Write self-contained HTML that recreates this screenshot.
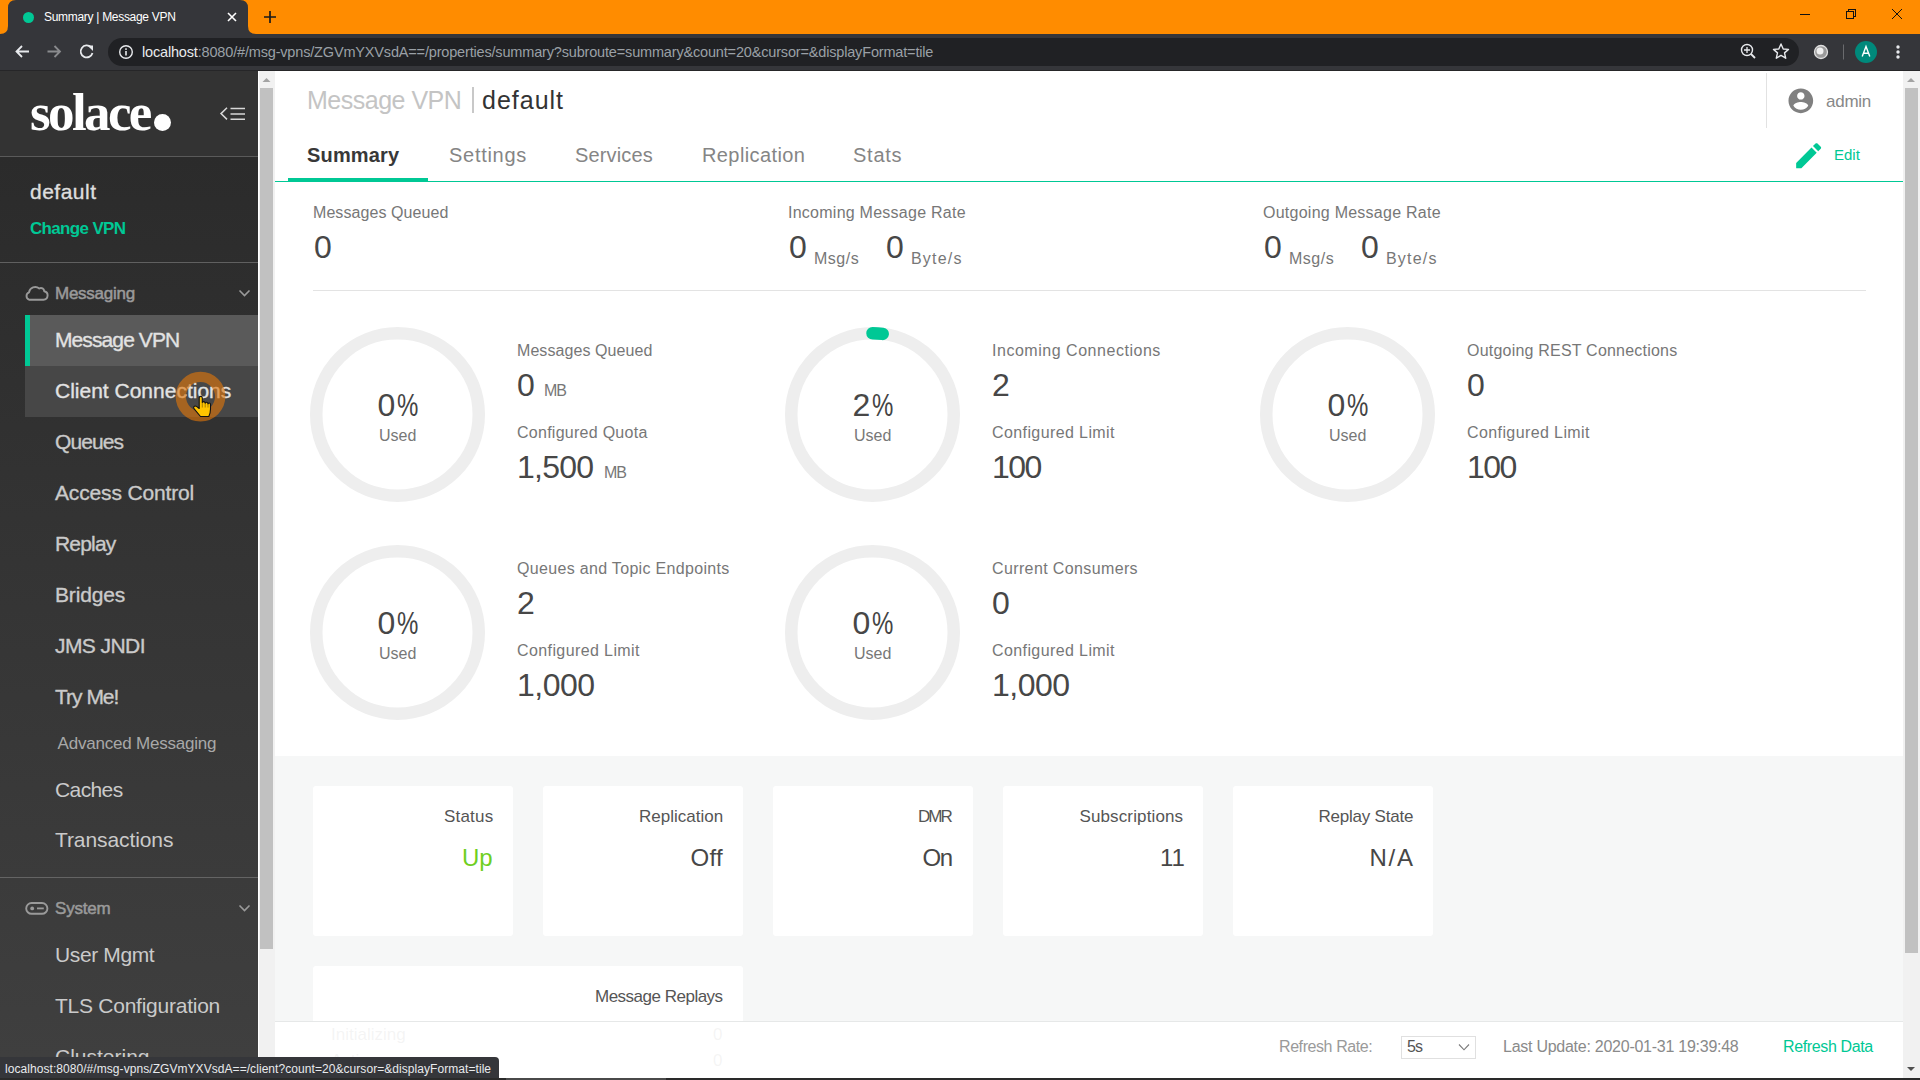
<!DOCTYPE html>
<html><head><meta charset="utf-8"><title>Summary | Message VPN</title>
<style>
html,body{margin:0;padding:0;width:1920px;height:1080px;overflow:hidden;background:#fff;}
body{position:relative;font-family:"Liberation Sans",sans-serif;}
.t{position:absolute;white-space:nowrap;line-height:1;font-family:"Liberation Sans",sans-serif;}
.r{position:absolute;display:block;}
</style></head><body>
<div class="r" style="left:0px;top:0px;width:1920px;height:34px;background:#ff8c00;"></div>
<svg class="r" style="left:0;top:0" width="270" height="34" viewBox="0 0 270 34"><path d="M0 34 Q8 34 8 26 L8 8 Q8 0 16 0 L240 0 Q248 0 248 8 L248 26 Q248 34 256 34 Z" fill="#35363a"/></svg>
<div class="r" style="left:0px;top:34px;width:1920px;height:36px;background:#35363a;"></div>
<div class="r" style="left:0px;top:70px;width:1920px;height:1px;background:#262628;"></div>
<div class="r" style="left:108px;top:38px;width:1691px;height:28px;background:#202124;border-radius:14px;"></div>
<div class="r" style="left:22.5px;top:11.5px;width:11px;height:11px;background:#00c895;border-radius:50%;"></div>
<div class="t" style="left:44.00px;top:11px;font-size:12px;color:#ffffff;letter-spacing:-0.300px;">Summary | Message VPN</div>
<svg class="r" style="left:226px;top:11px" width="12" height="12"><path d="M2 2L10 10M10 2L2 10" stroke="#fff" stroke-width="1.6"/></svg>
<svg class="r" style="left:262px;top:9px" width="16" height="16"><path d="M8 2V14M2 8H14" stroke="#1a1a1a" stroke-width="1.7"/></svg>
<svg class="r" style="left:1795px;top:4px" width="120" height="26"><path d="M5 10.5H15" stroke="#111" stroke-width="1"/><path d="M51.5 7.5H58.5V14.5H51.5Z M53.5 7.5V5.5H60.5V12.5H58.5" fill="none" stroke="#111" stroke-width="1" shape-rendering="crispEdges"/><path d="M97 5L107 15M107 5L97 15" stroke="#111" stroke-width="1"/></svg>
<svg class="r" style="left:12px;top:42px" width="90" height="20" viewBox="0 0 90 20">
<path d="M17 9.5H5 M10 4L4.5 9.5L10 15" fill="none" stroke="#e8eaed" stroke-width="1.8"/>
<path d="M35.5 9.5H47.5 M42.5 4L48 9.5L42.5 15" fill="none" stroke="#8a8b8e" stroke-width="1.8"/>
<path d="M79 5.2 A6 6 0 1 0 80.5 11" fill="none" stroke="#e8eaed" stroke-width="1.8"/><path d="M75.5 3.5L81 3.5L81 9Z" fill="#e8eaed"/>
</svg>
<svg class="r" style="left:118px;top:44px" width="16" height="16"><circle cx="8" cy="8" r="6.3" fill="none" stroke="#e8eaed" stroke-width="1.4"/><rect x="7.2" y="7" width="1.6" height="4.5" fill="#e8eaed"/><rect x="7.2" y="4.3" width="1.6" height="1.6" fill="#e8eaed"/></svg>
<div class="t" style="left:142px;top:44px;font-size:14.5px;line-height:16px;letter-spacing:-0.17px;white-space:nowrap;color:#9aa0a6;"><span style="color:#e8eaed">localhost</span>:8080/#/msg-vpns/ZGVmYXVsdA==/properties/summary?subroute=summary&amp;count=20&amp;cursor=&amp;displayFormat=tile</div>
<svg class="r" style="left:1736px;top:40px" width="180" height="24" viewBox="0 0 180 24">
<circle cx="11" cy="10" r="5.5" fill="none" stroke="#e8eaed" stroke-width="1.4"/><path d="M15 14L19 18" stroke="#e8eaed" stroke-width="1.8"/><path d="M11 7V13M8 10H14" stroke="#e8eaed" stroke-width="1.3"/>
<path d="M45 4 L47.2 9 L52.5 9.4 L48.5 12.9 L49.7 18.2 L45 15.4 L40.3 18.2 L41.5 12.9 L37.5 9.4 L42.8 9 Z" fill="none" stroke="#e8eaed" stroke-width="1.4" stroke-linejoin="round"/>
<circle cx="85" cy="12" r="6.5" fill="#9a9a9a" stroke="#e0e0e0" stroke-width="1.3"/><circle cx="84" cy="11" r="3.5" fill="#f0f0f0"/>
<rect x="107" y="4.5" width="1" height="15" fill="#6a6b6e"/>
<circle cx="130" cy="12" r="11" fill="#00897b"/>
<path d="M126.2 16.5L130 6.5L133.8 16.5M127.4 13.3H132.6" fill="none" stroke="#fff" stroke-width="1.4"/>
<circle cx="162" cy="7" r="1.7" fill="#e8eaed"/><circle cx="162" cy="12" r="1.7" fill="#e8eaed"/><circle cx="162" cy="17" r="1.7" fill="#e8eaed"/>
</svg>
<div class="r" style="left:0px;top:71px;width:258px;height:86px;background:#333333;"></div>
<div class="r" style="left:0;top:157px;width:258px;height:923px;background:linear-gradient(#2b2b2b,#3f3f3f 900px);"></div>
<div class="r" style="left:258px;top:71px;width:1px;height:1009px;background:#ffffff;"></div>
<div class="r" style="left:259px;top:71px;width:16px;height:1009px;background:#f1f1f1;"></div>
<div class="r" style="left:260px;top:88px;width:13px;height:861px;background:#c1c1c1;"></div>
<svg class="r" style="left:262px;top:76px" width="10" height="8"><path d="M0.5 6L4.5 2L8.5 6Z" fill="#a3a3a3"/></svg>
<div class="t" style="left:30px;top:86px;font-family:'Liberation Serif',serif;font-weight:bold;font-size:53px;line-height:53px;color:#fff;letter-spacing:-2.6px;">solace</div>
<div class="r" style="left:153.5px;top:113.5px;width:17px;height:17px;background:#fff;border-radius:50%;"></div>
<svg class="r" style="left:218px;top:105px" width="30" height="18"><path d="M9 2.8L3 8.6L9 14.4" fill="none" stroke="#d8d8d8" stroke-width="1.5"/><path d="M12.5 3.6H27M12.5 9H27M12.5 14.3H27" stroke="#d8d8d8" stroke-width="1.5"/></svg>
<div class="r" style="left:0px;top:156px;width:258px;height:1px;background:#5a5a5a;"></div>
<div class="t" style="left:30.00px;top:181px;font-size:21px;color:#dedede;letter-spacing:0.500px;-webkit-text-stroke:0.35px currentColor;">default</div>
<div class="t" style="left:30.00px;top:220px;font-size:17px;color:#00c895;font-weight:bold;letter-spacing:-0.667px;">Change VPN</div>
<div class="r" style="left:0px;top:262px;width:258px;height:1px;background:#606060;"></div>
<svg class="r" style="left:24px;top:283px" width="28" height="20"><path d="M5 16.7 L19.5 16.7 A4.3 4.3 0 0 0 20.2 8.2 A3.2 3.2 0 0 0 15.3 5.5 A6.3 6.3 0 0 0 5 9.3 A4 4 0 0 0 5 16.7 Z" fill="none" stroke="#9a9a9a" stroke-width="1.9" stroke-linejoin="round"/></svg>
<div class="t" style="left:55.00px;top:285px;font-size:17px;color:#9a9a9a;letter-spacing:-0.250px;-webkit-text-stroke:0.5px currentColor;">Messaging</div>
<svg class="r" style="left:237px;top:287px" width="16" height="12"><path d="M2.5 3.5L7.5 8.5L12.5 3.5" fill="none" stroke="#9a9a9a" stroke-width="1.6"/></svg>
<div class="r" style="left:25px;top:315px;width:233px;height:51px;background:#5a5a5a;"></div>
<div class="r" style="left:25px;top:315px;width:5px;height:51px;background:#00c895;"></div>
<div class="r" style="left:25px;top:366px;width:233px;height:51px;background:#474747;"></div>
<div class="t" style="left:55.00px;top:329px;font-size:21px;color:#e2e2e2;letter-spacing:-0.900px;-webkit-text-stroke:0.35px currentColor;">Message VPN</div>
<div class="t" style="left:55.00px;top:380px;font-size:21px;color:#e2e2e2;-webkit-text-stroke:0.35px currentColor;">Client Connections</div>
<div class="t" style="left:55.00px;top:431px;font-size:21px;color:#cacaca;letter-spacing:-0.900px;-webkit-text-stroke:0.35px currentColor;">Queues</div>
<div class="t" style="left:55.00px;top:482px;font-size:21px;color:#cacaca;letter-spacing:-0.154px;-webkit-text-stroke:0.35px currentColor;">Access Control</div>
<div class="t" style="left:55.00px;top:533px;font-size:21px;color:#cacaca;letter-spacing:-0.800px;-webkit-text-stroke:0.35px currentColor;">Replay</div>
<div class="t" style="left:55.00px;top:584px;font-size:21px;color:#cacaca;letter-spacing:-0.167px;-webkit-text-stroke:0.35px currentColor;">Bridges</div>
<div class="t" style="left:55.00px;top:635px;font-size:21px;color:#cacaca;letter-spacing:-0.571px;-webkit-text-stroke:0.35px currentColor;">JMS JNDI</div>
<div class="t" style="left:55.00px;top:686px;font-size:21px;color:#cacaca;letter-spacing:-1.000px;-webkit-text-stroke:0.35px currentColor;">Try Me!</div>
<div class="t" style="left:57.50px;top:735px;font-size:17px;color:#a8a8a8;letter-spacing:-0.206px;">Advanced Messaging</div>
<div class="t" style="left:55.00px;top:779px;font-size:21px;color:#cacaca;letter-spacing:-0.600px;">Caches</div>
<div class="t" style="left:55.00px;top:829px;font-size:21px;color:#cacaca;letter-spacing:-0.091px;">Transactions</div>
<div class="r" style="left:0px;top:877px;width:258px;height:1px;background:#646464;"></div>
<svg class="r" style="left:24px;top:900px" width="28" height="18"><rect x="2.2" y="3" width="21.2" height="10.8" rx="5.4" fill="none" stroke="#9a9a9a" stroke-width="1.9"/><circle cx="8.2" cy="8.4" r="1.9" fill="#9a9a9a"/><path d="M13 8.4H19.8" stroke="#9a9a9a" stroke-width="1.8"/></svg>
<div class="t" style="left:55.00px;top:900px;font-size:17px;color:#9a9a9a;letter-spacing:-0.200px;-webkit-text-stroke:0.5px currentColor;">System</div>
<svg class="r" style="left:237px;top:902px" width="16" height="12"><path d="M2.5 3.5L7.5 8.5L12.5 3.5" fill="none" stroke="#9a9a9a" stroke-width="1.6"/></svg>
<div class="t" style="left:55.00px;top:944px;font-size:21px;color:#cacaca;letter-spacing:-0.375px;">User Mgmt</div>
<div class="t" style="left:55.00px;top:995px;font-size:21px;color:#cacaca;letter-spacing:-0.250px;">TLS Configuration</div>
<div class="t" style="left:55.00px;top:1046px;font-size:21px;color:#cacaca;">Clustering</div>
<div class="r" style="left:275px;top:71px;width:1628px;height:1007px;background:#ffffff;"></div>
<div class="t" style="left:307.00px;top:88px;font-size:25px;color:#c4c4c4;letter-spacing:-0.500px;">Message VPN</div>
<div class="r" style="left:471.5px;top:87px;width:2px;height:26px;background:#c8c8c8;"></div>
<div class="t" style="left:482.00px;top:88px;font-size:25px;color:#333333;letter-spacing:1.000px;">default</div>
<div class="r" style="left:1766px;top:73px;width:1px;height:55px;background:#e2e2e2;"></div>
<svg class="r" style="left:1785.9px;top:85.5px" width="29.64" height="29.64" viewBox="0 0 24 24"><path d="M12 2C6.48 2 2 6.48 2 12s4.48 10 10 10 10-4.48 10-10S17.52 2 12 2zm0 3c1.66 0 3 1.34 3 3s-1.34 3-3 3-3-1.34-3-3 1.34-3 3-3zm0 14.2c-2.5 0-4.71-1.28-6-3.22.03-1.99 4-3.08 6-3.08 1.99 0 5.97 1.09 6 3.08-1.29 1.94-3.5 3.22-6 3.22z" fill="#808080"/></svg>
<div class="t" style="left:1826.00px;top:93px;font-size:17px;color:#888888;letter-spacing:-0.250px;">admin</div>
<div class="t" style="left:307.00px;top:145px;font-size:20px;color:#383838;font-weight:bold;letter-spacing:0.167px;">Summary</div>
<div class="t" style="left:449.00px;top:145px;font-size:20px;color:#858585;letter-spacing:0.714px;">Settings</div>
<div class="t" style="left:575.00px;top:145px;font-size:20px;color:#858585;letter-spacing:0.143px;">Services</div>
<div class="t" style="left:702.00px;top:145px;font-size:20px;color:#858585;letter-spacing:0.400px;">Replication</div>
<div class="t" style="left:853.00px;top:145px;font-size:20px;color:#858585;letter-spacing:0.750px;">Stats</div>
<div class="r" style="left:275px;top:181px;width:1628px;height:1px;background:#00c895;"></div>
<div class="r" style="left:288px;top:178px;width:140px;height:4px;background:#00c895;"></div>
<svg class="r" style="left:1791.5px;top:138.6px" width="33.3" height="33.3" viewBox="0 0 24 24"><path d="M3 17.25V21h3.75L17.81 9.94l-3.75-3.75L3 17.25zM20.71 7.04c.39-.39.39-1.02 0-1.41l-2.34-2.34c-.39-.39-1.02-.39-1.41 0l-1.83 1.83 3.75 3.75 1.83-1.83z" fill="#00c895"/></svg>
<div class="t" style="left:1834.00px;top:147px;font-size:15px;color:#00c895;">Edit</div>
<div class="t" style="left:313.00px;top:205px;font-size:16px;color:#777777;letter-spacing:0.071px;">Messages Queued</div>
<div class="t" style="left:788.00px;top:205px;font-size:16px;color:#777777;letter-spacing:0.250px;">Incoming Message Rate</div>
<div class="t" style="left:1263.00px;top:205px;font-size:16px;color:#777777;letter-spacing:0.250px;">Outgoing Message Rate</div>
<div class="t" style="left:314.00px;top:231px;font-size:32px;color:#474747;">0</div>
<div class="t" style="left:789.00px;top:231px;font-size:32px;color:#474747;">0</div>
<div class="t" style="left:814.00px;top:251px;font-size:16px;color:#777777;letter-spacing:0.500px;">Msg/s</div>
<div class="t" style="left:886.00px;top:231px;font-size:32px;color:#474747;">0</div>
<div class="t" style="left:911.00px;top:251px;font-size:16px;color:#777777;letter-spacing:1.200px;">Byte/s</div>
<div class="t" style="left:1264.00px;top:231px;font-size:32px;color:#474747;">0</div>
<div class="t" style="left:1289.00px;top:251px;font-size:16px;color:#777777;letter-spacing:0.500px;">Msg/s</div>
<div class="t" style="left:1361.00px;top:231px;font-size:32px;color:#474747;">0</div>
<div class="t" style="left:1386.00px;top:251px;font-size:16px;color:#777777;letter-spacing:1.200px;">Byte/s</div>
<div class="r" style="left:313px;top:290px;width:1553px;height:1px;background:#e3e3e3;"></div>
<svg class="r" style="left:310px;top:327px" width="176" height="176" viewBox="0 0 176 176"><circle cx="87.5" cy="87.5" r="81.25" fill="none" stroke="#eeeeee" stroke-width="12.5"/></svg>
<div class="t" style="left:377.50px;top:388.8px;font-size:32px;color:#474747;">0</div>
<div class="t" style="left:397.00px;top:388.8px;font-size:32px;color:#444444;transform:scaleX(0.75);transform-origin:0 0;">%</div>
<div class="t" style="left:379.00px;top:427.8px;font-size:16px;color:#777777;">Used</div>
<div class="t" style="left:517.00px;top:343px;font-size:16px;color:#777777;letter-spacing:0.071px;">Messages Queued</div>
<div class="t" style="left:517.00px;top:369px;font-size:32px;color:#474747;">0</div>
<div class="t" style="left:544.00px;top:383px;font-size:16px;color:#777777;letter-spacing:-1.000px;">MB</div>
<div class="t" style="left:517.00px;top:425px;font-size:16px;color:#777777;letter-spacing:0.267px;">Configured Quota</div>
<div class="t" style="left:517.00px;top:451px;font-size:32px;color:#474747;letter-spacing:-0.750px;">1,500</div>
<div class="t" style="left:604.00px;top:465px;font-size:16px;color:#777777;letter-spacing:-1.000px;">MB</div>
<svg class="r" style="left:785px;top:327px" width="176" height="176" viewBox="0 0 176 176"><circle cx="87.5" cy="87.5" r="81.25" fill="none" stroke="#eeeeee" stroke-width="12.5"/><path d="M87.5 6.25 A81.25 81.25 0 0 1 97.68 6.89" fill="none" stroke="#00c895" stroke-width="12.5" stroke-linecap="round"/></svg>
<div class="t" style="left:852.50px;top:388.8px;font-size:32px;color:#474747;">2</div>
<div class="t" style="left:872.00px;top:388.8px;font-size:32px;color:#444444;transform:scaleX(0.75);transform-origin:0 0;">%</div>
<div class="t" style="left:854.00px;top:427.8px;font-size:16px;color:#777777;">Used</div>
<div class="t" style="left:992.00px;top:343px;font-size:16px;color:#777777;letter-spacing:0.526px;">Incoming Connections</div>
<div class="t" style="left:992.00px;top:369px;font-size:32px;color:#474747;">2</div>
<div class="t" style="left:992.00px;top:425px;font-size:16px;color:#777777;letter-spacing:0.400px;">Configured Limit</div>
<div class="t" style="left:992.00px;top:451px;font-size:32px;color:#474747;letter-spacing:-1.500px;">100</div>
<svg class="r" style="left:1260px;top:327px" width="176" height="176" viewBox="0 0 176 176"><circle cx="87.5" cy="87.5" r="81.25" fill="none" stroke="#eeeeee" stroke-width="12.5"/></svg>
<div class="t" style="left:1327.50px;top:388.8px;font-size:32px;color:#474747;">0</div>
<div class="t" style="left:1347.00px;top:388.8px;font-size:32px;color:#444444;transform:scaleX(0.75);transform-origin:0 0;">%</div>
<div class="t" style="left:1329.00px;top:427.8px;font-size:16px;color:#777777;">Used</div>
<div class="t" style="left:1467.00px;top:343px;font-size:16px;color:#777777;letter-spacing:0.208px;">Outgoing REST Connections</div>
<div class="t" style="left:1467.00px;top:369px;font-size:32px;color:#474747;">0</div>
<div class="t" style="left:1467.00px;top:425px;font-size:16px;color:#777777;letter-spacing:0.400px;">Configured Limit</div>
<div class="t" style="left:1467.00px;top:451px;font-size:32px;color:#474747;letter-spacing:-1.500px;">100</div>
<svg class="r" style="left:310px;top:545px" width="176" height="176" viewBox="0 0 176 176"><circle cx="87.5" cy="87.5" r="81.25" fill="none" stroke="#eeeeee" stroke-width="12.5"/></svg>
<div class="t" style="left:377.50px;top:606.8px;font-size:32px;color:#474747;">0</div>
<div class="t" style="left:397.00px;top:606.8px;font-size:32px;color:#444444;transform:scaleX(0.75);transform-origin:0 0;">%</div>
<div class="t" style="left:379.00px;top:645.8px;font-size:16px;color:#777777;">Used</div>
<div class="t" style="left:517.00px;top:561px;font-size:16px;color:#777777;letter-spacing:0.320px;">Queues and Topic Endpoints</div>
<div class="t" style="left:517.00px;top:587px;font-size:32px;color:#474747;">2</div>
<div class="t" style="left:517.00px;top:643px;font-size:16px;color:#777777;letter-spacing:0.400px;">Configured Limit</div>
<div class="t" style="left:517.00px;top:669px;font-size:32px;color:#474747;letter-spacing:-0.500px;">1,000</div>
<svg class="r" style="left:785px;top:545px" width="176" height="176" viewBox="0 0 176 176"><circle cx="87.5" cy="87.5" r="81.25" fill="none" stroke="#eeeeee" stroke-width="12.5"/></svg>
<div class="t" style="left:852.50px;top:606.8px;font-size:32px;color:#474747;">0</div>
<div class="t" style="left:872.00px;top:606.8px;font-size:32px;color:#444444;transform:scaleX(0.75);transform-origin:0 0;">%</div>
<div class="t" style="left:854.00px;top:645.8px;font-size:16px;color:#777777;">Used</div>
<div class="t" style="left:992.00px;top:561px;font-size:16px;color:#777777;letter-spacing:0.375px;">Current Consumers</div>
<div class="t" style="left:992.00px;top:587px;font-size:32px;color:#474747;">0</div>
<div class="t" style="left:992.00px;top:643px;font-size:16px;color:#777777;letter-spacing:0.400px;">Configured Limit</div>
<div class="t" style="left:992.00px;top:669px;font-size:32px;color:#474747;letter-spacing:-0.500px;">1,000</div>
<div class="r" style="left:275px;top:756px;width:1628px;height:322px;background:#f6f7f7;"></div>
<div class="r" style="left:313px;top:786px;width:200px;height:150px;background:#ffffff;border-radius:3px;"></div>
<div class="t" style="left:444.00px;top:808px;font-size:17px;color:#555555;letter-spacing:0.200px;">Status</div>
<div class="t" style="left:462.00px;top:846px;font-size:24px;color:#6fcf1f;">Up</div>
<div class="r" style="left:543px;top:786px;width:200px;height:150px;background:#ffffff;border-radius:3px;"></div>
<div class="t" style="left:639.00px;top:808px;font-size:17px;color:#555555;">Replication</div>
<div class="t" style="left:690.50px;top:846px;font-size:24px;color:#474747;letter-spacing:0.250px;">Off</div>
<div class="r" style="left:773px;top:786px;width:200px;height:150px;background:#ffffff;border-radius:3px;"></div>
<div class="t" style="left:918.00px;top:808px;font-size:17px;color:#555555;letter-spacing:-2.000px;">DMR</div>
<div class="t" style="left:922.40px;top:846px;font-size:24px;color:#474747;letter-spacing:-1.400px;">On</div>
<div class="r" style="left:1003px;top:786px;width:200px;height:150px;background:#ffffff;border-radius:3px;"></div>
<div class="t" style="left:1079.50px;top:808px;font-size:17px;color:#555555;letter-spacing:0.125px;">Subscriptions</div>
<div class="t" style="left:1160.00px;top:846px;font-size:24px;color:#474747;">11</div>
<div class="r" style="left:1233px;top:786px;width:200px;height:150px;background:#ffffff;border-radius:3px;"></div>
<div class="t" style="left:1318.50px;top:808px;font-size:17px;color:#555555;letter-spacing:-0.227px;">Replay State</div>
<div class="t" style="left:1369.50px;top:846px;font-size:24px;color:#474747;letter-spacing:1.750px;">N/A</div>
<div class="r" style="left:313px;top:966px;width:430px;height:120px;background:#ffffff;border-radius:3px;"></div>
<div class="t" style="left:595.00px;top:988px;font-size:17px;color:#555555;letter-spacing:-0.500px;">Message Replays</div>
<div class="t" style="left:331.00px;top:1026px;font-size:17px;color:#777777;">Initializing</div>
<div class="t" style="left:713.00px;top:1026px;font-size:17px;color:#777777;">0</div>
<div class="t" style="left:331.00px;top:1052px;font-size:17px;color:#777777;">Active</div>
<div class="t" style="left:713.00px;top:1052px;font-size:17px;color:#777777;">0</div>
<div class="r" style="left:275px;top:1021px;width:1628px;height:1px;background:#e6e8e8;"></div>
<div class="r" style="left:275px;top:1022px;width:1628px;height:56px;background:rgba(255,255,255,0.92);"></div>
<div class="t" style="left:1279.00px;top:1039px;font-size:16px;color:#9a9a9a;letter-spacing:-0.417px;">Refresh Rate:</div>
<div class="r" style="left:1401px;top:1036px;width:75px;height:23px;background:#ffffff;border:1px solid #e0e0e0;box-sizing:border-box;"></div>
<div class="t" style="left:1407.00px;top:1039px;font-size:16px;color:#555555;letter-spacing:-1.000px;">5s</div>
<svg class="r" style="left:1457px;top:1042px" width="14" height="10"><path d="M2 2.5L7 7.8L12 2.5" fill="none" stroke="#7a7a7a" stroke-width="1.1"/></svg>
<div class="t" style="left:1503.00px;top:1039px;font-size:16px;color:#8a8a8a;letter-spacing:-0.258px;">Last Update: 2020-01-31 19:39:48</div>
<div class="t" style="left:1783.00px;top:1039px;font-size:16px;color:#00c895;letter-spacing:-0.364px;">Refresh Data</div>
<div class="r" style="left:1903px;top:71px;width:17px;height:1007px;background:#f1f1f1;"></div>
<div class="r" style="left:1905px;top:88px;width:13px;height:865px;background:#c1c1c1;"></div>
<svg class="r" style="left:1906px;top:76px" width="10" height="8"><path d="M1 6L5 2L9 6Z" fill="#a3a3a3"/></svg>
<svg class="r" style="left:1906px;top:1065px" width="10" height="8"><path d="M1 2L5 6L9 2Z" fill="#505050"/></svg>
<svg class="r" style="left:170px;top:366px" width="62" height="62" viewBox="0 0 62 62"><circle cx="30.5" cy="30.6" r="19.7" fill="none" stroke="rgba(225,118,10,0.62)" stroke-width="10.3"/><path d="M30.7 30.4 Q29.2 30.4 29.2 32 L29.2 42.5 L26.8 40.6 Q25 39.4 23.8 40.8 Q23.2 41.8 24.2 42.8 L30.5 50.5 L38.8 50.5 Q40.5 47 40.5 43 L40.5 38.5 Q40.5 37 39.2 37 Q38.2 37 38 38 Q37.8 36.2 36.5 36.2 Q35.4 36.2 35.2 37.3 Q35 35.6 33.6 35.6 Q32.6 35.6 32.3 36.5 L32.3 32 Q32.3 30.4 30.7 30.4 Z" fill="#ffc400" stroke="#111" stroke-width="1.1" stroke-linejoin="round"/><path d="M35.2 37.3V41.5M38 38V41.5M32.3 36.5V41.5" stroke="#6a5000" stroke-width="0.6"/></svg>
<div class="r" style="left:0;top:1057px;width:499px;height:21px;background:#35363a;border-top-right-radius:4px;"></div>
<div class="t" style="left:5px;top:1062px;font-size:12px;line-height:14px;color:#e8eaed;letter-spacing:0.06px;">localhost:8080/#/msg-vpns/ZGVmYXVsdA==/client?count=20&amp;cursor=&amp;displayFormat=tile</div>
<div class="r" style="left:0px;top:1078px;width:1920px;height:2px;background:#2a2a2a;"></div>
<div class="r" style="left:506px;top:1078px;width:160px;height:2px;background:#4a4a4a;"></div>
</body></html>
